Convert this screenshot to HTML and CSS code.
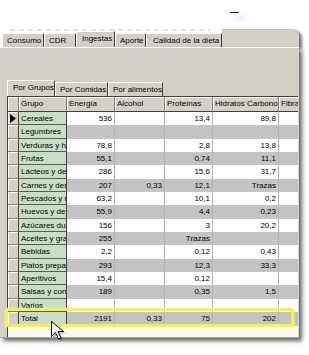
FILE: index.html
```html
<!DOCTYPE html>
<html lang="es">
<head>
    <meta charset="UTF-8">
    <title>Ingestas por grupos</title>
    <link rel="stylesheet" href="styles.css">
</head>
<body>
    <div class="stray"></div>

    <div class="window">
        <div class="tabs">
            <div class="tab w-consumo">Consumo</div>
            <div class="tab w-cdr">CDR</div>
            <div class="tab active w-ingestas">Ingestas</div>
            <div class="tab w-aporte">Aporte</div>
            <div class="tab w-calidad">Calidad de la dieta</div>
            <div class="tab-fill"></div>
        </div>

        <div class="page">
            <div class="subtabs">
                <div class="tab active w-grupos">Por Grupos</div>
                <div class="tab w-comidas">Por Comidas</div>
                <div class="tab w-alimentos">Por alimentos</div>
            </div>

            <div class="grid">
                <div class="row head">
                    <div class="h"></div>
                    <div class="h">Grupo</div>
                    <div class="h">Energía</div>
                    <div class="h">Alcohol</div>
                    <div class="h">Proteínas</div>
                    <div class="h">Hidratos Carbono</div>
                    <div class="h">Fibra</div>
                </div>

                <div class="rows">
                    <div class="row">
                        <div class="c ind"><svg class="arrow" width="6" height="9" viewBox="0 0 6 9"><path d="M0 0L6 4.5L0 9Z"/></svg></div>
                        <div class="c grp">Cereales</div>
                        <div class="c">536</div><div class="c"></div><div class="c">13,4</div><div class="c">89,8</div><div class="c"></div>
                    </div>
                    <div class="row alt">
                        <div class="c ind"></div>
                        <div class="c grp">Legumbres</div>
                        <div class="c"></div><div class="c"></div><div class="c"></div><div class="c"></div><div class="c"></div>
                    </div>
                    <div class="row">
                        <div class="c ind"></div>
                        <div class="c grp">Verduras y hortalizas</div>
                        <div class="c">78,8</div><div class="c"></div><div class="c">2,8</div><div class="c">13,8</div><div class="c"></div>
                    </div>
                    <div class="row alt">
                        <div class="c ind"></div>
                        <div class="c grp">Frutas</div>
                        <div class="c">55,1</div><div class="c"></div><div class="c">0,74</div><div class="c">11,1</div><div class="c"></div>
                    </div>
                    <div class="row">
                        <div class="c ind"></div>
                        <div class="c grp">Lácteos y derivados</div>
                        <div class="c">286</div><div class="c"></div><div class="c">15,6</div><div class="c">31,7</div><div class="c"></div>
                    </div>
                    <div class="row alt">
                        <div class="c ind"></div>
                        <div class="c grp">Carnes y derivados</div>
                        <div class="c">207</div><div class="c">0,33</div><div class="c">12,1</div><div class="c">Trazas</div><div class="c"></div>
                    </div>
                    <div class="row">
                        <div class="c ind"></div>
                        <div class="c grp">Pescados y mariscos</div>
                        <div class="c">63,2</div><div class="c"></div><div class="c">10,1</div><div class="c">0,2</div><div class="c"></div>
                    </div>
                    <div class="row alt">
                        <div class="c ind"></div>
                        <div class="c grp">Huevos y derivados</div>
                        <div class="c">55,9</div><div class="c"></div><div class="c">4,4</div><div class="c">0,23</div><div class="c"></div>
                    </div>
                    <div class="row">
                        <div class="c ind"></div>
                        <div class="c grp">Azúcares dulces</div>
                        <div class="c">156</div><div class="c"></div><div class="c">3</div><div class="c">20,2</div><div class="c"></div>
                    </div>
                    <div class="row alt">
                        <div class="c ind"></div>
                        <div class="c grp">Aceites y grasas</div>
                        <div class="c">255</div><div class="c"></div><div class="c">Trazas</div><div class="c"></div><div class="c"></div>
                    </div>
                    <div class="row">
                        <div class="c ind"></div>
                        <div class="c grp">Bebidas</div>
                        <div class="c">2,2</div><div class="c"></div><div class="c">0,12</div><div class="c">0,43</div><div class="c"></div>
                    </div>
                    <div class="row alt">
                        <div class="c ind"></div>
                        <div class="c grp">Platos preparados</div>
                        <div class="c">293</div><div class="c"></div><div class="c">12,3</div><div class="c">33,3</div><div class="c"></div>
                    </div>
                    <div class="row">
                        <div class="c ind"></div>
                        <div class="c grp">Aperitivos</div>
                        <div class="c">15,4</div><div class="c"></div><div class="c">0.12</div><div class="c"></div><div class="c"></div>
                    </div>
                    <div class="row alt">
                        <div class="c ind"></div>
                        <div class="c grp">Salsas y condimentos</div>
                        <div class="c">189</div><div class="c"></div><div class="c">0,35</div><div class="c">1,5</div><div class="c"></div>
                    </div>
                    <div class="row">
                        <div class="c ind"></div>
                        <div class="c grp">Varios</div>
                        <div class="c"></div><div class="c"></div><div class="c"></div><div class="c"></div><div class="c"></div>
                    </div>
                </div>

                <div class="row alt total">
                    <div class="c ind"></div>
                    <div class="c grp">Total</div>
                    <div class="c">2191</div><div class="c">0,33</div><div class="c">75</div><div class="c">202</div><div class="c"></div>
                </div>
                <div class="grid-foot"></div>
            </div>
        </div>
    </div>

    <!-- resaltado de la fila de totales -->
    <div class="highlight"></div>

    <svg class="cursor" width="14" height="20" viewBox="0 0 14 20">
        <path d="M2.5 2.5v15l4-4 3 6.5 2.5-1-3-6.5h5.5z" fill="#000" opacity="0.25"/>
        <path d="M0.5 0.5v15l4-4 3 6.5 2.5-1-3-6.5h5.5z" fill="#fff" stroke="#000" stroke-width="1" stroke-linejoin="miter"/>
    </svg>
</body>
</html>
```

FILE: styles.css
```css
/* ventana de ingestas */
body {
    font-family: "Liberation Sans", Arial, sans-serif;
    font-size: 8px;
    color: #000;
    background-color: #fff;
    margin: 0;
    padding: 0;
    position: relative;
    width: 309px;
    height: 355px;
    overflow: hidden;
}
.stray {
    position: absolute;
    left: 230px;
    top: 12px;
    width: 9px;
    height: 1px;
    background-color: #222;
    box-shadow: 6px 6px 4px rgba(0, 0, 0, 0.35);
}
.window {
    margin-top: 29px;
    width: 299px;
}
.tabs {
    display: flex;
    align-items: flex-end;
    height: 18px;
    padding-left: 2px;
    box-sizing: border-box;
    background: repeating-linear-gradient(90deg, #e2e2e2 0 5px, transparent 5px 9px) 10px 0 / 200px 2px no-repeat;
}
.tab {
    height: 14px;
    line-height: 13px;
    padding-left: 4px;
    background-color: #d4d0c8;
    border-top: 1px solid #fff;
    border-left: 1px solid #fff;
    border-right: 1px solid #404040;
    box-sizing: border-box;
    white-space: nowrap;
    overflow: hidden;
}
.tab.active {
    height: 16px;
    line-height: 14px;
}
.w-consumo { width: 42px; }
.w-cdr { width: 32px; }
.w-ingestas { width: 39px; padding-left: 5px; }
.w-aporte { width: 31px; }
.w-calidad { width: 76px; padding-left: 6px; }
.tab-fill {
    flex: 1;
    align-self: stretch;
    background-color: #d4d0c8;
    border-top: 1px solid #c4c0b8;
    border-top-right-radius: 7px;
    box-shadow: 3px 2px 3px rgba(0, 0, 0, 0.55);
}
.page {
    position: relative;
    height: 291px;
    padding: 31px 2px 0 7px;
    background-color: #d4d0c8;
    border-top: 1px solid #fff;
    border-bottom: 1px solid #a8a49c;
    box-sizing: border-box;
    box-shadow: 3px 3px 4px rgba(0, 0, 0, 0.6);
}
.subtabs {
    display: flex;
    align-items: flex-end;
    height: 17px;
}
.w-grupos { width: 48px; padding-left: 5px; }
.w-comidas { width: 53px; }
.w-alimentos { width: 55px; }

/* rejilla */
.grid {
    width: 290px;
    border-left: 1px solid #404040;
    border-top: 1px solid #404040;
    overflow: hidden;
}
.row {
    display: grid;
    grid-template-columns: 11px 48px 48px 50px 48px 66px 40px;
    height: 13.35px;
}
.row.head {
    height: 15px;
}
.h {
    background-color: #d4d0c8;
    border-right: 1px solid #808080;
    border-bottom: 1px solid #404040;
    box-shadow: inset 1px 1px 0 #fff;
    padding-left: 2px;
    line-height: 14px;
    white-space: nowrap;
    overflow: hidden;
}
.rows {
    height: 200px;
    overflow: hidden;
}
.c {
    background-color: #fff;
    border-right: 1px solid #b4b4b4;
    padding: 0 2px;
    text-align: right;
    line-height: 13px;
    white-space: nowrap;
    overflow: hidden;
    box-sizing: border-box;
}
.row.alt .c {
    background-color: #c4c4c4;
}
.row .c.ind {
    background-color: #d4d0c8;
    border-right: 1px solid #404040;
    border-bottom: 1px solid #808080;
    box-shadow: inset 1px 1px 0 #fff;
    padding: 0;
}
.row .c.grp {
    background-color: #c9ddc7;
    border-right: 1px solid #404040;
    border-bottom: 1px solid #5a5a5a;
    text-align: left;
    overflow: hidden;
}
.arrow {
    display: block;
    margin: 2px 0 0 2px;
}
.row.total {
    height: 14px;
}
.grid-foot {
    height: 11px;
    background-color: #fbfbe6;
}
.highlight {
    position: absolute;
    left: 5px;
    top: 308px;
    width: 289px;
    height: 19px;
    border: 3px solid #f2f256;
    border-radius: 3px;
    box-sizing: border-box;
    box-shadow: 0 0 2px #fafaa0;
}
.cursor {
    position: absolute;
    left: 51px;
    top: 321px;
}
```
